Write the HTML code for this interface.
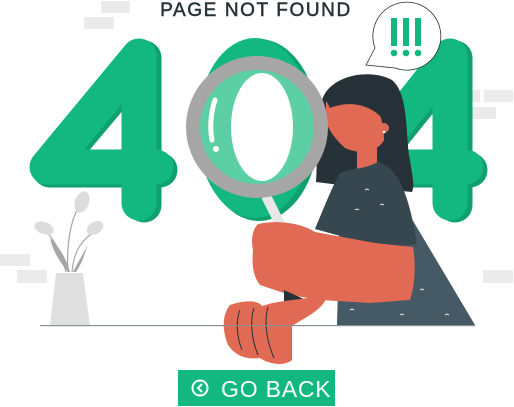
<!DOCTYPE html>
<html><head><meta charset="utf-8"><style>
html,body{margin:0;padding:0;background:#fff;width:514px;height:407px;overflow:hidden}
svg{display:block}
</style></head><body>
<svg width="514" height="407" viewBox="0 0 514 407" xmlns="http://www.w3.org/2000/svg">
<g fill="#ebebeb">
<rect x="101" y="1" width="29" height="12"/><rect x="84" y="17" width="30" height="12"/>
<rect x="467" y="90" width="13" height="12"/><rect x="484" y="90" width="29" height="12"/><rect x="468" y="107" width="28" height="12"/>
<rect x="0" y="254" width="30" height="12"/><rect x="17" y="270" width="30" height="13"/>
<rect x="483" y="270" width="30" height="13"/>
</g>
<text x="256" y="16" text-anchor="middle" font-family="Liberation Sans, sans-serif" font-size="19" fill="#263238" stroke="#263238" stroke-width="0.5" letter-spacing="1.6">PAGE NOT FOUND</text>
<g fill="none" stroke-linejoin="round" stroke-linecap="round" stroke-width="35">
<path d="M144 58 L50 170 L160 170 M144 58 L144 205" stroke="#0ea06f"/>
<path d="M139 56 L47 167 L156 167 M139 56 L139 203" stroke="#12b880"/>
<path d="M455 58 L365 170 L470 170 M455 58 L455 205" stroke="#0ea06f"/>
<path d="M450 56 L362 167 L466 167 M450 56 L450 203" stroke="#12b880"/>
</g>
<ellipse cx="259" cy="130" rx="60" ry="91" fill="#0ea06f"/>
<ellipse cx="255" cy="128" rx="58" ry="90" fill="#12b880"/>
<path d="M375 48 A34 34 0 1 1 395 68 L366 65 Z" fill="#fff" stroke="#263238" stroke-width="0.8"/>
<g fill="#12b880">
<rect x="391" y="18" width="6" height="28"/><rect x="403" y="18" width="6" height="28"/><rect x="415" y="18" width="6" height="28"/>
<circle cx="394" cy="53" r="3.3"/><circle cx="406" cy="53" r="3.3"/><circle cx="418" cy="53" r="3.3"/>
</g>
<path d="M322 100 C330 75 370 68 392 80 C410 95 405 140 410 160 C412 175 415 185 412 192 L340 185 L316 182 C318 150 316 120 322 100 Z" fill="#263238"/>
<path d="M326 102 C340 94 365 94 375 105 C380 112 384 125 384 140 C378 152 360 155 345 148 C336 140 328 130 326 120 Z" fill="#e06a53"/>
<path d="M326 100 C340 88 362 84 380 110 L382 118 C370 105 350 100 330 108 Z" fill="#263238"/>
<circle cx="384" cy="128" r="5" fill="#e06a53"/>
<circle cx="384" cy="132" r="1.3" fill="#fff"/>
<rect x="357" y="145" width="20" height="30" fill="#e06a53"/>
<path d="M378 162 L475 325 L337 325 L340 200 Z" fill="#455a64"/>
<path d="M340 173 C352 168 362 170 378 162 C400 168 410 200 417 244 L400 246 L375 243 L355 240 L315 229 C325 205 333 185 340 173 Z" fill="#37474f"/>
<g stroke="#fff" stroke-width="0.8" fill="none">
<path d="M365 190 l2 -1 l2 1"/><path d="M355 210 l2 -1 l2 1"/><path d="M380 205 l2 -1 l2 1"/><path d="M440 260 l2 -1 l2 1"/><path d="M460 300 l2 -1 l2 1"/><path d="M420 290 l2 -1 l2 1"/><path d="M400 315 l2 -1 l2 1"/><path d="M445 315 l2 -1 l2 1"/><path d="M430 230 l2 -1 l2 1"/><path d="M350 310 l2 -1 l2 1"/>
</g>
<path d="M266 196 L281 226" stroke="#e8e8e8" stroke-width="10"/>
<circle cx="257" cy="127" r="64" fill="#5ccfa5"/>
<ellipse cx="262" cy="127" rx="31" ry="54" fill="#fff"/>
<circle cx="257" cy="127" r="64" fill="none" stroke="#a6a6a6" stroke-width="14"/>
<path d="M215 100 C210 115 210 130 212 140" stroke="#fff" stroke-width="5" stroke-linecap="round" fill="none"/>
<circle cx="216" cy="149" r="3" fill="#fff"/>
<path d="M258 224 C275 220 300 222 315 232 L375 243 L413 247 C416 265 415 285 410 300 L370 303 L320 300 L290 295 L260 285 C252 275 252 262 253 250 C251 240 252 230 258 224 Z" fill="#e06a53"/>
<path d="M284 290 L306 300 L300 306 L284 304 Z" fill="#263238"/>
<path d="M230 305 C245 300 258 300 262 306 C280 300 300 300 327 295 C325 310 300 320 292 326 L292 360 C285 366 270 365 260 358 C245 360 235 355 228 345 C222 330 222 315 230 305 Z" fill="#e06a53"/>
<g stroke="#263238" stroke-width="1" fill="none">
<path d="M240 310 C236 320 236 335 242 350"/><path d="M254 308 C250 320 251 338 258 355"/><path d="M268 307 C264 320 266 340 274 358"/>
</g>
<g fill="#a6a6a6">
<path d="M68 272 C58 260 52 248 50 238 C60 248 66 258 70 272 Z"/>
<path d="M73 272 C80 258 86 250 88 243 C84 258 80 266 76 272 Z"/>
</g>
<g stroke="#a6a6a6" stroke-width="1.2" fill="none"><path d="M68 272 C66 240 72 215 82 202"/><path d="M72 272 C74 250 82 240 94 232"/><path d="M66 272 C62 255 55 240 45 230"/></g>
<g fill="#dcdcdc"><ellipse cx="82" cy="202" rx="7" ry="11" transform="rotate(20 82 202)"/><ellipse cx="44" cy="228" rx="10" ry="6" transform="rotate(20 44 228)"/><ellipse cx="95" cy="228" rx="9" ry="6" transform="rotate(-30 95 228)"/></g>
<path d="M56 273 L83 273 L90 326 L50 326 Z" fill="#e0e0e0"/>
<rect x="40" y="325" width="435" height="1.2" fill="#8a9096"/>
<rect x="178" y="370" width="157" height="36" fill="#12b880"/>
<circle cx="200" cy="388" r="7.5" fill="none" stroke="#fff" stroke-width="2"/>
<path d="M202 384 L198 388 L202 392" fill="none" stroke="#fff" stroke-width="2"/>
<text x="221" y="397" font-family="Liberation Sans, sans-serif" font-size="23" fill="#fff" letter-spacing="0.8">GO BACK</text>
</svg>
</body></html>
